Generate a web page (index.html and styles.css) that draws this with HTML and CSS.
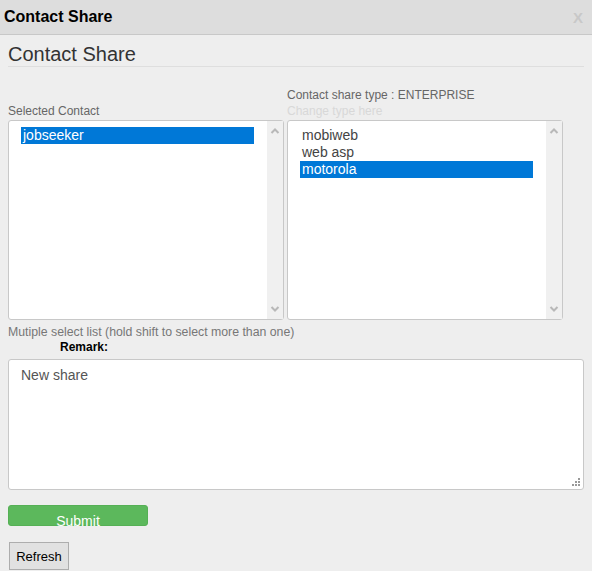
FILE: index.html
```html
<!DOCTYPE html>
<html lang="en">
<head>
    <meta charset="UTF-8">
    <meta name="viewport" content="width=device-width, initial-scale=1.0">
    <title>Contact Share</title>
    <link rel="stylesheet" href="styles.css">
</head>
<body>
<div class="titlebar">
    <span class="title">Contact Share</span>
    <span class="close">X</span>
</div>

<div class="content">
    <h2>Contact Share</h2>

    <div class="columns">
        <div class="column">
            <div class="label">Selected Contact</div>
            <div class="listbox">
                <div class="options">
                    <div class="option selected">jobseeker</div>
                </div>
                <div class="scrollbar">
                    <svg width="16" height="12" viewBox="0 0 16 12"><path d="M4.5 10 L8 6.5 L11.5 10" fill="none" stroke="#b8b8b8" stroke-width="2"/></svg>
                    <svg width="16" height="12" viewBox="0 0 16 12"><path d="M4.5 2 L8 5.5 L11.5 2" fill="none" stroke="#b8b8b8" stroke-width="2"/></svg>
                </div>
            </div>
        </div>
        <div class="column">
            <div class="label">Contact share type : ENTERPRISE</div>
            <div class="label hint">Change type here</div>
            <div class="listbox">
                <div class="options">
                    <div class="option">mobiweb</div>
                    <div class="option">web asp</div>
                    <div class="option selected">motorola</div>
                </div>
                <div class="scrollbar">
                    <svg width="16" height="12" viewBox="0 0 16 12"><path d="M4.5 10 L8 6.5 L11.5 10" fill="none" stroke="#b8b8b8" stroke-width="2"/></svg>
                    <svg width="16" height="12" viewBox="0 0 16 12"><path d="M4.5 2 L8 5.5 L11.5 2" fill="none" stroke="#b8b8b8" stroke-width="2"/></svg>
                </div>
            </div>
        </div>
    </div>

    <div class="note">Mutiple select list (hold shift to select more than one)</div>
    <div class="remark">Remark:</div>
    <div class="textarea">
        New share
        <svg class="grip" width="9" height="9" viewBox="0 0 9 9">
            <rect x="6" y="0" width="2" height="2" fill="#999"/>
            <rect x="3" y="3" width="2" height="2" fill="#999"/>
            <rect x="6" y="3" width="2" height="2" fill="#999"/>
            <rect x="0" y="6" width="2" height="2" fill="#999"/>
            <rect x="3" y="6" width="2" height="2" fill="#999"/>
            <rect x="6" y="6" width="2" height="2" fill="#999"/>
        </svg>
    </div>

    <button class="submit">Submit</button>
    <button class="refresh">Refresh</button>
</div>
</body>
</html>
```

FILE: styles.css
```css
body {
    font-family: "Liberation Sans", Arial, sans-serif;
    background-color: #eeeeee;
    margin: 0;
    padding: 0;
}
.titlebar {
    height: 34px;
    background-color: #dddddd;
    border-bottom: 1px solid #c8c8c8;
    display: flex;
    justify-content: space-between;
    align-items: center;
    padding: 0 9px 0 4px;
}
.title {
    font-size: 16px;
    font-weight: bold;
    color: #000;
}
.close {
    font-size: 15px;
    font-weight: bold;
    color: #c8c8c8;
}
.content {
    padding: 0 8px;
}
h2 {
    font-size: 20px;
    font-weight: normal;
    color: #333;
    line-height: 23px;
    margin: 8px 0 0 0;
    padding-bottom: 0;
    border-bottom: 1px solid #dedede;
}
.columns {
    display: flex;
    align-items: flex-end;
    gap: 3px;
    margin-top: 21px;
}
.column {
    width: 276px;
}
.label {
    font-size: 12px;
    line-height: 15px;
    color: #666;
}
.hint {
    color: #d8d8d8;
    margin-bottom: 1px;
}
.column .label:first-child {
    margin-bottom: 1px;
}
.listbox {
    display: flex;
    height: 200px;
    box-sizing: border-box;
    background-color: #fff;
    border: 1px solid #c8c8c8;
    border-radius: 3px;
}
.options {
    flex: 1;
    padding: 6px 13px 0 12px;
}
.option {
    font-size: 14px;
    line-height: 17px;
    color: #444;
    padding-left: 2px;
}
.option.selected {
    background-color: #0078d7;
    color: #fff;
}
.scrollbar {
    width: 16px;
    background-color: #f0f0f0;
    display: flex;
    flex-direction: column;
    justify-content: space-between;
    padding: 2px 0;
}
.note {
    font-size: 12.3px;
    line-height: 15px;
    color: #777;
    margin-top: 5px;
}
.remark {
    font-size: 12px;
    line-height: 15px;
    font-weight: bold;
    color: #000;
    margin-left: 52px;
    margin-bottom: 4px;
}
.textarea {
    position: relative;
    height: 131px;
    box-sizing: border-box;
    background-color: #fff;
    border: 1px solid #c8c8c8;
    border-radius: 3px;
    padding: 7px 12px;
    font-size: 14px;
    line-height: 17px;
    color: #555;
}
.grip {
    position: absolute;
    right: 2px;
    bottom: 2px;
}
button {
    font-family: "Liberation Sans", Arial, sans-serif;
    display: block;
    cursor: pointer;
}
.submit {
    width: 140px;
    height: 21px;
    box-sizing: border-box;
    margin-top: 15px;
    padding: 8px 0 0 0;
    font-size: 14px;
    line-height: 14px;
    color: #fff;
    background-color: #5cb85c;
    border: 1px solid #55b055;
    border-radius: 3px;
}
.refresh {
    width: 60px;
    height: 28px;
    box-sizing: border-box;
    margin: 16px 0 0 1px;
    padding: 0;
    font-size: 13px;
    color: #000;
    background-color: #e1e1e1;
    border: 1px solid #adadad;
    border-radius: 0;
}
```
